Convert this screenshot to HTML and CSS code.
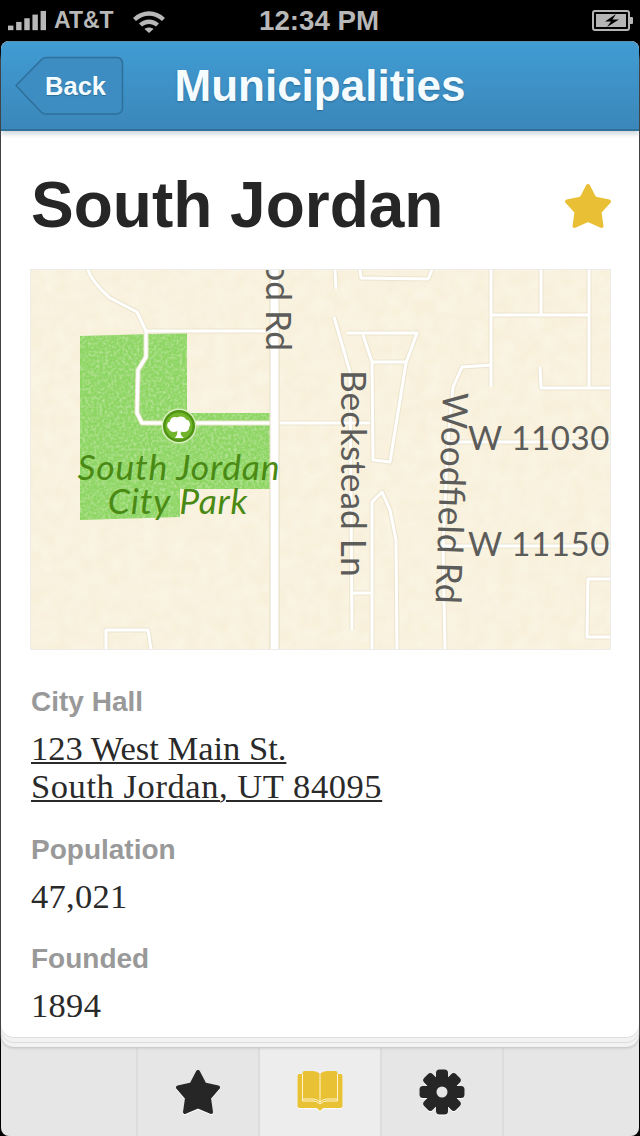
FILE: index.html

```html
<!DOCTYPE html>
<html lang="en">
<head>
  <meta charset="UTF-8">
  <title>South Jordan - Municipalities</title>
  <meta name="viewport" content="width=device-width, initial-scale=1.0">
  <link rel="stylesheet" href="styles.css">
</head>
<body>

<div class="status">
  <div class="status-left">
    <svg class="signal" width="38" height="22" viewBox="0 0 42 24" preserveAspectRatio="none">
      <rect x="0" y="17" width="6" height="5" />
      <rect x="9" y="13" width="6" height="9" />
      <rect x="18" y="9" width="6" height="13" />
      <rect x="27" y="5" width="6" height="17" />
      <rect x="36" y="1" width="6" height="21" />
    </svg>
    <span class="carrier">AT&amp;T</span>
    <svg class="wifi" width="34" height="24" viewBox="0 0 34 24">
      <path d="M1 9 C10 0 24 0 33 9 L30 12 C22 5 12 5 4 12 Z" />
      <path d="M7 14.500 C13 9 21 9 27 14.500 L24 17.500 C20 14 14 14 10 17.500 Z" />
      <path d="M12.500 20 C15 18 19 18 21.500 20 L17 24 Z" />
    </svg>
  </div>
  <span class="clock">12:34 PM</span>
  <svg class="battery" width="42" height="22" viewBox="0 0 42 22">
    <rect x="1" y="1" width="36" height="19" rx="2" fill="none" stroke="#b5b5b5" stroke-width="2" />
    <rect x="4" y="4" width="30" height="13" fill="#b5b5b5" />
    <path d="M37 7 h3 a1 1 0 0 1 1 1 v5 a1 1 0 0 1 -1 1 h-3 Z" fill="#b5b5b5" />
    <path d="M24 4 L13 11.500 H19 L15 17 L27 9.500 H20.500 Z" fill="#000" />
  </svg>
</div>

<div class="card">
  <header class="nav">
    <a class="back">
      <svg class="back-shape" width="110" height="60" viewBox="0 0 110 60">
        <path d="M32 1.500 H103 a5.500 5.500 0 0 1 5.500 5.500 V52 a6 6 0 0 1 -6 6 H32 Q29 58 27 56 L2 29.500 L27 4 Q29 1.500 32 1.500 Z" />
      </svg>
      <span>Back</span>
    </a>
    <h1>Municipalities</h1>
  </header>

  <main class="content">
    <div class="title-row">
      <h2>South Jordan</h2>
      <svg class="fav" width="48" height="46" viewBox="0 0 48 46">
        <path class="gold-star" d="M24 3 L30.500 15.500 L45 18.500 L35.500 29 L37.500 43 L24 37 L10.500 43 L12.500 29 L3 18.500 L17.500 15.500 Z" />
      </svg>
    </div>

    <div class="map">
      <svg width="579" height="379" viewBox="31 270 579 379">
        <defs>
          <filter id="paper" x="0" y="0" width="100%" height="100%">
            <feTurbulence type="fractalNoise" baseFrequency="0.07" numOctaves="3" seed="4" />
            <feColorMatrix values="0 0 0 0 1  0 0 0 0 1  0 0 0 0 1  0.5 0 0 0 -0.14" />
          </filter>
          <filter id="grass" x="0" y="0" width="100%" height="100%">
            <feTurbulence type="fractalNoise" baseFrequency="0.35" numOctaves="2" seed="9" />
            <feColorMatrix values="0 0 0 0 0.66  0 0 0 0 0.88  0 0 0 0 0.48  1.2 0 0 0 -0.5" />
            <feComposite in2="SourceGraphic" operator="in" />
            <feMerge>
              <feMergeNode in="SourceGraphic" />
              <feMergeNode />
            </feMerge>
          </filter>
          <g id="roads">
            <path d="M88 270 Q92 282 110 298 L137 312 L146 331 V357 L138 370 L137 413 L142 423 H370" />
            <path d="M146 331 H270" />
            <path d="M106 649 V630 H148 L151 649" />
            <path d="M335 270 L336 289" />
            <path d="M360 270 L361 278 L428 279 L432 270" />
            <path d="M334 317 L350 372 L352 630" />
            <path d="M347 333 H417 L406 363 L390 462 L373 460 L372 362 L363 335" />
            <path d="M372 362 H406" />
            <path d="M372 649 V502 L382 492 L390 510 L396 540 L397 649" />
            <path d="M353 593 H371" />
            <path d="M445 649 L443 547 L448 440 L453 387 L462 367 L492 365" />
            <path d="M491 270 V387" />
            <path d="M491 315 H588" />
            <path d="M541 270 V315" />
            <path d="M589 270 V388" />
            <path d="M540 367 L541 388 H610" />
            <path d="M450 442 H610" />
            <path d="M443 546 H610" />
            <path d="M610 579 H588 L587 637 H610" />
          </g>
        </defs>

        <rect x="31" y="270" width="579" height="379" fill="#f8f0da" />
        <rect x="31" y="270" width="579" height="379" filter="url(#paper)" />

        <path class="park" filter="url(#grass)" d="M80 336 L187 333 V413 H270 V489 H180 V517 L80 520 Z" />

        <use href="#roads" class="road-edge" />
        <use href="#roads" class="road-fill" />
        <path class="main-edge" d="M274.500 270 V649" />
        <path class="main-fill" d="M274.500 270 V649" />

        <circle cx="179" cy="426" r="17.500" fill="#d9eebf" />
        <circle cx="179" cy="426" r="16" fill="#4f9412" />
        <circle cx="179" cy="426" r="13.500" fill="#72b52c" />
        <path fill="#fff" d="M175 438 Q177.500 435 177.500 431 C174 433 170 432 169 429 C166 427 167 422 170 421.500 C170 418 174 416 177 417.500 C180 415.500 185 416.500 186 419.500 C190 420 191 425 189 427.500 C189.500 431 185 433 181.500 431.500 L180.500 433.500 Q181 436 184 438 Z" />

        <text class="park-label" x="179" y="480" text-anchor="middle">South Jordan</text>
        <text class="park-label" x="178" y="514" text-anchor="middle">City Park</text>

        <text class="street" transform="translate(266 351) rotate(90)" text-anchor="end">Wood Rd</text>
        <text class="street" transform="translate(341 370) rotate(90)">Beckstead Ln</text>
        <text class="street" transform="translate(443 392) rotate(92)">Woodfield Rd</text>
        <text class="street-h" x="468" y="450">W 11030</text>
        <text class="street-h" x="468" y="556">W 11150</text>
      </svg>
    </div>

    <dl class="facts">
      <dt>City Hall</dt>
      <dd class="address"><span class="line-one">123 West Main St.</span><br>South Jordan, UT 84095</dd>
      <dt>Population</dt>
      <dd>47,021</dd>
      <dt>Founded</dt>
      <dd>1894</dd>
    </dl>
  </main>
</div>

<nav class="tabbar">
  <div class="tab">
    <svg class="tab-icon" width="48" height="50" viewBox="0 0 48 50">
      <path class="dark-star" d="M24 3 L30.500 15.500 L44 18.500 L35 29 L37 43 L24 37.500 L11 43 L13 29 L4 18.500 L17.500 15.500 Z" />
    </svg>
  </div>
  <div class="tab active">
    <svg class="tab-icon" width="48" height="50" viewBox="0 0 48 50">
      <path fill="#e8c135" d="M1.500 7 Q1.500 5 3.500 5 H6.500 V4 Q6.500 2 8.500 2 H16 Q21 2 24 5 Q27 2 32 2 H39.500 Q41.500 2 41.500 4 V5 H44.500 Q46.500 5 46.500 7 V37 Q46.500 39 44.500 39 H29 Q27 39 26 40 L24 42 L22 40 Q21 39 19 39 H3.500 Q1.500 39 1.500 37 Z" />
      <path class="book-line" d="M6.500 5 V32 H17 Q21 32 24 35 Q27 32 31 32 H41.500 V5" />
      <path class="book-line" d="M6.500 30 H17 Q21 30 24 33 Q27 30 31 30 H41.500" />
      <path class="book-line" d="M24 5 V34" />
    </svg>
  </div>
  <div class="tab">
    <svg class="tab-icon" width="48" height="50" viewBox="0 0 48 50">
      <g fill="#262626">
        <rect x="18" y="0.500" width="12" height="45" rx="3.500" />
        <rect x="18" y="0.500" width="12" height="45" rx="3.500" transform="rotate(45 24 23)" />
        <rect x="18" y="0.500" width="12" height="45" rx="3.500" transform="rotate(90 24 23)" />
        <rect x="18" y="0.500" width="12" height="45" rx="3.500" transform="rotate(135 24 23)" />
        <circle cx="24" cy="23" r="16" />
      </g>
      <circle cx="24" cy="23" r="5.500" fill="#e6e6e6" />
    </svg>
  </div>
</nav>

</body>
</html>
```

FILE: styles.css

```css
* {
  box-sizing: border-box;
}
body {
  margin: 0;
  width: 640px;
  height: 1136px;
  overflow: hidden;
  background: #000;
  font-family: "Liberation Sans", Arial, sans-serif;
  display: flex;
  flex-direction: column;
}

/* status bar */
.status {
  height: 41px;
  display: flex;
  align-items: center;
  justify-content: space-between;
  padding: 0 6px 0 8px;
  color: #b8b8b8;
  position: relative;
}
.status-left {
  display: flex;
  align-items: center;
}
.signal, .wifi {
  fill: #b8b8b8;
}
.carrier {
  font-size: 23px;
  font-weight: bold;
  margin: 0 18px 0 8px;
}
.clock {
  position: absolute;
  left: 259px;
  top: 5px;
  font-size: 27.700px;
  font-weight: bold;
}

/* main card */
.card {
  height: 996px;
  margin: 0 1px;
  background: #fff;
  border-radius: 8px 8px 13px 13px;
  position: relative;
  z-index: 1;
  box-shadow: 0 1px 0 #dedede, 0 5px 0 #f2f2f2, 0 6px 0 #dcdcdc, 0 10px 0 #f2f2f2, 0 11px 3px #bdbdbd;
}
.nav {
  height: 90px;
  border-radius: 8px 8px 0 0;
  background: linear-gradient(#409cd3, #3b87ba);
  border-top: 1px solid #5b8fb0;
  border-bottom: 2px solid #307299;
  box-shadow: 0 3px 5px rgba(60, 90, 110, 0.25);
  display: flex;
  align-items: center;
  justify-content: center;
  position: relative;
}
.nav h1 {
  margin: 0;
  font-size: 44px;
  font-weight: bold;
  color: #f4fcff;
  text-shadow: 0 1px 2px #2b6c96;
}
.back {
  position: absolute;
  left: 13px;
  top: 14px;
  width: 110px;
  height: 60px;
  display: flex;
  align-items: center;
  justify-content: flex-end;
  padding-right: 18px;
  color: #f4fcff;
  font-size: 25.500px;
  font-weight: bold;
  text-shadow: 0 1px 1px #2b6c96;
}
.back span {
  position: relative;
}
.back-shape {
  position: absolute;
  left: 0;
  top: 0;
}
.back-shape path {
  fill: #3d8dc2;
  stroke: #2f6f9b;
  stroke-width: 1.500;
}

.content {
  padding: 0 29px;
}
.title-row {
  height: 138px;
  display: flex;
  align-items: center;
  justify-content: space-between;
  padding-top: 9px;
}
.title-row h2 {
  margin: 0;
  font-size: 64px;
  font-weight: bold;
  color: #262626;
  padding-left: 1px;
}
.gold-star {
  fill: #e9bf35;
  stroke: #e9bf35;
  stroke-width: 4;
  stroke-linejoin: round;
}
.fav {
  margin: 3px -2px 0 0;
}

/* map */
.map {
  width: 581px;
  height: 381px;
  border: 1px solid #ececea;
}
.map svg {
  display: block;
}
.park {
  fill: #8ed664;
}
.road-edge, .road-fill, .main-edge, .main-fill {
  fill: none;
  stroke-linejoin: round;
}
.road-edge {
  stroke: #ebe4ce;
  stroke-width: 5;
}
.road-fill {
  stroke: #fff;
  stroke-width: 3;
}
.main-edge {
  stroke: #e3dcc6;
  stroke-width: 10;
}
.main-fill {
  stroke: #fff;
  stroke-width: 8;
}
.park-label {
  font-family: Lato, sans-serif;
  font-style: italic;
  font-size: 35.500px;
  letter-spacing: 0.800px;
  fill: #4a8a14;
}
.street, .street-h {
  font-family: Lato, sans-serif;
  font-size: 35.300px;
  fill: #5c5c5a;
}
.street-h {
  font-size: 33px;
  letter-spacing: 0.600px;
}

/* facts under the map */
.facts {
  margin: 35px 0 0;
  padding-left: 1px;
}
.facts dt {
  font-size: 28px;
  font-weight: bold;
  color: #999;
  line-height: 34px;
}
.facts dd {
  margin: 0 0 27px;
  font-family: "Liberation Serif", Georgia, serif;
  font-size: 34.500px;
  letter-spacing: 0.300px;
  line-height: 38px;
  color: #2a2a2a;
  padding-top: 10px;
}
.facts .address {
  margin-bottom: 28px;
  letter-spacing: 0.570px;
  text-decoration: underline;
  text-decoration-thickness: 2px;
  text-underline-offset: 2px;
}
.line-one {
  letter-spacing: 0;
}

/* tab bar */
.tabbar {
  height: 99px;
  margin: 0 1px;
  padding-top: 11px;
  background: #e6e6e6;
  border-radius: 0 0 8px 8px;
  display: flex;
  justify-content: center;
}
.tab {
  width: 122px;
  border-left: 2px solid #dcdcdc;
  display: flex;
  justify-content: center;
  padding-top: 21px;
}
.tab:last-child {
  border-right: 2px solid #dcdcdc;
  width: 124px;
}
.tab.active {
  background: #ededed;
}
.tab-icon {
  display: block;
  filter: drop-shadow(0 1.500px 0 #fff);
}
.dark-star {
  fill: #262626;
  stroke: #262626;
  stroke-width: 4;
  stroke-linejoin: round;
}
.book-line {
  fill: none;
  stroke: #fff4cc;
  stroke-width: 1;
}
```
